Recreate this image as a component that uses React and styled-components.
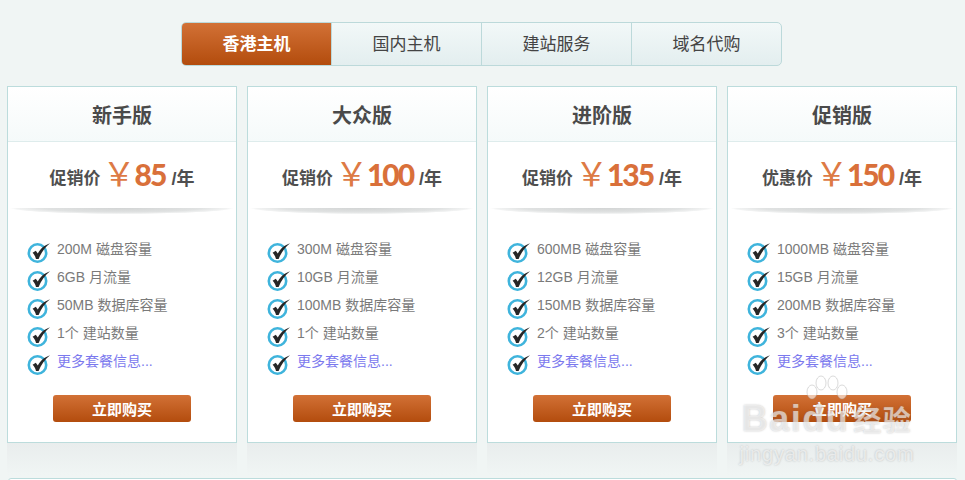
import React from 'react'
import styled, { createGlobalStyle } from 'styled-components'

const GlobalStyle = createGlobalStyle`
    html, body {
        margin: 0;
        padding: 0;
        height: 480px;
        overflow: hidden;
        background: #f0f5f4;
        font-family: "Liberation Sans", "Noto Sans CJK SC", sans-serif;
    }
`

const plans = [
    { name: '新手版', label: '促销价', price: 85, items: ['200M 磁盘容量', '6GB 月流量', '50MB 数据库容量', '1个 建站数量'] },
    { name: '大众版', label: '促销价', price: 100, items: ['300M 磁盘容量', '10GB 月流量', '100MB 数据库容量', '1个 建站数量'] },
    { name: '进阶版', label: '促销价', price: 135, items: ['600MB 磁盘容量', '12GB 月流量', '150MB 数据库容量', '2个 建站数量'] },
    { name: '促销版', label: '优惠价', price: 150, items: ['1000MB 磁盘容量', '15GB 月流量', '200MB 数据库容量', '3个 建站数量'] },
]

const tabs = ['香港主机', '国内主机', '建站服务', '域名代购']

const Check = () => (
    <CheckIcon viewBox="0 0 24 22" width="24" height="22">
        <circle cx="10.5" cy="12" r="8.7" fill="#fff" stroke="#3fb4dc" strokeWidth="2.6" />
        <path d="M5.6 11.8 L8.8 9.8 L10.8 12.4 C13 8.2 16.8 4.4 23 2.2 C18 6.4 14 11.6 11.6 18 L9 18 C8.4 15.4 7.2 13.4 5.6 11.8 Z" fill="#262626" />
    </CheckIcon>
)

const Paw = () => (
    <svg viewBox="0 0 44 30" width="44" height="30">
        <g fill="rgba(255,255,255,0.6)" stroke="rgba(150,150,150,0.35)" strokeWidth="1">
            <ellipse cx="7" cy="17" rx="5" ry="7" />
            <ellipse cx="16" cy="8" rx="5" ry="7" />
            <ellipse cx="28" cy="8" rx="5" ry="7" />
            <ellipse cx="37" cy="17" rx="5" ry="7" />
        </g>
    </svg>
)

const App = () => {
    return (
        <>
            <GlobalStyle />
            <Page>
                <TabBar>
                    {tabs.map((tab, i) => (
                        <Tab key={tab} $active={i === 0}>{tab}</Tab>
                    ))}
                </TabBar>
                <Cards>
                    {plans.map(plan => (
                        <CardWrap key={plan.name}>
                            <Card>
                                <CardTitle>{plan.name}</CardTitle>
                                <PriceRow>
                                    <PriceLabel>{plan.label}</PriceLabel>
                                    <Yen>￥</Yen>
                                    <Amount>{plan.price}</Amount>
                                    <Unit>/年</Unit>
                                </PriceRow>
                                <Divider />
                                <Features>
                                    {plan.items.map(item => (
                                        <Feature key={item}>
                                            <Check />
                                            <span>{item}</span>
                                        </Feature>
                                    ))}
                                    <Feature $link>
                                        <Check />
                                        <span>更多套餐信息...</span>
                                    </Feature>
                                </Features>
                                <BuyButton>立即购买</BuyButton>
                            </Card>
                            <CardShadow />
                        </CardWrap>
                    ))}
                </Cards>
                <BottomPanel />
            </Page>
            <Watermark>
                <Paw />
                <MarkLine>Baidu<MarkCn>经验</MarkCn></MarkLine>
                <MarkUrl>jingyan.baidu.com</MarkUrl>
            </Watermark>
        </>
    )
}

const Page = styled.div`
    width: 965px;
    height: 480px;
    overflow: hidden;
    padding-top: 22px;
    box-sizing: border-box;
`

const TabBar = styled.div`
    width: 601px;
    height: 44px;
    margin-left: 181px;
    box-sizing: border-box;
    display: flex;
    border: 1px solid #bcd9da;
    border-radius: 5px;
    overflow: hidden;
    background: linear-gradient(#f2f8f8, #e3eeef);
`

const Tab = styled.div`
    width: 150px;
    flex: none;
    box-sizing: border-box;
    padding-bottom: 3px;
    display: flex;
    align-items: center;
    justify-content: center;
    font-size: 17px;
    border-right: 1px solid #bcd9da;
    color: ${props => props.$active ? '#fff' : '#444'};
    font-weight: ${props => props.$active ? 'bold' : 'normal'};
    background: ${props => props.$active ? 'linear-gradient(#d27136, #b34c0d)' : 'none'};
    &:last-child {
        border-right: none;
        flex: 1;
    }
`

const Cards = styled.div`
    display: flex;
    gap: 10px;
    margin: 20px 0 0 7px;
`

const CardWrap = styled.div`
    width: 230px;
    flex: none;
`

const Card = styled.div`
    height: 357px;
    box-sizing: border-box;
    border: 1px solid #bcdcdc;
    background: #fff;
    display: flex;
    flex-direction: column;
`

const CardShadow = styled.div`
    height: 32px;
    background: linear-gradient(#e9eded, #f0f5f4);
`

const CardTitle = styled.div`
    height: 54px;
    flex: none;
    display: flex;
    align-items: center;
    justify-content: center;
    font-size: 20px;
    font-weight: bold;
    color: #4a4a4a;
    background: linear-gradient(#fff, #f5fafa);
    border-bottom: 1px solid #deecec;
`

const PriceRow = styled.div`
    height: 66px;
    flex: none;
    display: flex;
    align-items: baseline;
    justify-content: center;
    line-height: 65px;
    color: #4f4f4f;
    font-weight: bold;
`

const PriceLabel = styled.span`
    font-size: 17px;
    margin-right: 2px;
    transform: translateY(-2px);
`

const Yen = styled.span`
    font-family: "Liberation Serif", "Noto Sans CJK SC", serif;
    font-weight: normal;
    font-size: 33px;
    color: #dd7a45;
    width: 32px;
`

const Amount = styled.span`
    font-family: Lato, sans-serif;
    font-weight: 900;
    font-size: 30px;
    color: #d9703a;
    letter-spacing: -2px;
`

const Unit = styled.span`
    font-size: 18px;
    margin-left: 6px;
    transform: translateY(-1px);
`

const Divider = styled.div`
    height: 6px;
    margin: 0 2px;
    background: radial-gradient(ellipse 50% 100% at 50% 0, #d2d4d4, #e0e2e2 70%, #f2f3f3 94%, rgba(255,255,255,0) 100%);
`

const Features = styled.ul`
    list-style: none;
    margin: 21px 0 0;
    padding: 0 0 0 19px;
`

const Feature = styled.li`
    height: 28px;
    display: flex;
    align-items: flex-start;
    font-size: 14px;
    line-height: 28px;
    color: ${props => props.$link ? '#7b79ee' : '#7a7a7a'};
`

const CheckIcon = styled.svg`
    flex: none;
    margin: 6px 6px 0 0;
`

const BuyButton = styled.div`
    width: 138px;
    height: 27px;
    margin: 20px auto 0;
    border-radius: 3px;
    display: flex;
    align-items: center;
    justify-content: center;
    color: #fff;
    font-size: 15px;
    font-weight: bold;
    background: linear-gradient(#d27136, #b34c0d);
`

const BottomPanel = styled.div`
    height: 10px;
    margin: 3px 8px 0;
    border: 1px solid #bcdcdc;
    border-radius: 3px 3px 0 0;
    background: #fff;
`

const Watermark = styled.div`
    position: absolute;
    left: 727px;
    top: 375px;
    width: 200px;
    display: flex;
    flex-direction: column;
    align-items: center;
    pointer-events: none;
    color: rgba(255, 255, 255, 0.6);
    text-shadow: 0 0 2px rgba(120, 120, 120, 0.45);
`

const MarkLine = styled.div`
    margin-top: -6px;
    font-size: 36px;
    font-weight: bold;
    line-height: 40px;
    letter-spacing: 1.5px;
    white-space: nowrap;
`

const MarkCn = styled.span`
    font-size: 28px;
    margin-left: 4px;
`

const MarkUrl = styled.div`
    font-size: 20px;
    line-height: 24px;
    letter-spacing: 0.8px;
`

export default App
